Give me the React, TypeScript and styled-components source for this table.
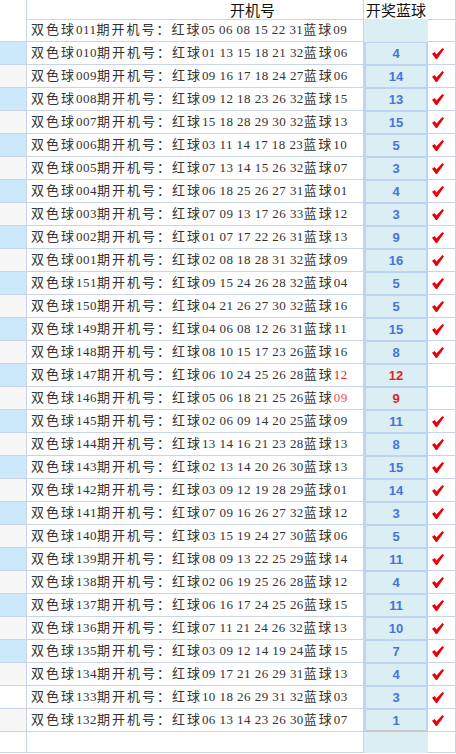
import styled, { createGlobalStyle } from 'styled-components';

const GlobalStyle = createGlobalStyle`
  html, body {
    margin: 0;
    padding: 0;
    background: #ffffff;
  }
`;

const Table = styled.div`
  width: 456px;
  display: flex;
  flex-direction: column;
  font-family: 'Liberation Serif', 'Noto Sans CJK SC', serif;
`;

const Row = styled.div<{ $height: number }>`
  display: grid;
  grid-template-columns: 27px 337px 64px 28px;
  height: ${p => p.$height}px;
`;

const SideCell = styled.div<{ $tone: 'white' | 'blue' | 'gray' }>`
  box-sizing: border-box;
  border-right: 1px solid #c9d5e6;
  border-bottom: 1px solid #c9d5e6;
  background: ${p => (p.$tone === 'blue' ? '#cce9fc' : p.$tone === 'gray' ? '#f7f7f7' : '#ffffff')};
`;

const HeadTitle = styled.div`
  box-sizing: border-box;
  border-right: 1px solid #c9d5e6;
  border-bottom: 1px solid #c9d5e6;
  padding-left: 203px;
  font-family: 'Noto Sans CJK SC', sans-serif;
  font-size: 15px;
  line-height: 19px;
  color: #111;
`;

const HeadBlue = styled.div`
  box-sizing: border-box;
  border-bottom: 1px solid #c9d5e6;
  font-family: 'Noto Sans CJK SC', sans-serif;
  font-size: 15px;
  line-height: 19px;
  color: #111;
  text-align: center;
  white-space: nowrap;
`;

const DrawCell = styled.div`
  box-sizing: border-box;
  border-right: 1px solid #c9d5e6;
  border-bottom: 1px solid #c9d5e6;
  padding-left: 4px;
  font-size: 13px;
  letter-spacing: 0.45px;
  line-height: 22px;
  color: #333;
  white-space: nowrap;
  overflow: hidden;
`;

const Han = styled.span`
  letter-spacing: 2px;
`;

const Miss = styled.span<{ $strong: boolean }>`
  color: ${p => (p.$strong ? '#e4222a' : '#f5484d')};
`;

const BlueCell = styled.div<{ $boxed: boolean; $last: boolean }>`
  box-sizing: border-box;
  background: #daeef4;
  border-left: 2px solid ${p => (p.$boxed ? '#bcd4ef' : 'transparent')};
  border-right: 2px solid ${p => (p.$boxed ? '#bcd4ef' : 'transparent')};
  border-top: 1px solid ${p => (p.$boxed ? '#bcd4ef' : 'transparent')};
  border-bottom: ${p => (p.$last ? '2px solid #c8c8c8' : p.$boxed ? '1px solid #bcd4ef' : '1px solid transparent')};
  display: flex;
  align-items: center;
  justify-content: center;
`;

const Num = styled.span<{ $miss: boolean }>`
  font-family: 'Liberation Sans', Arial, sans-serif;
  font-weight: bold;
  font-size: 13px;
  color: ${p => (p.$miss ? '#e41e25' : '#4674d9')};
`;

const CheckCell = styled.div`
  box-sizing: border-box;
  border-right: 1px solid #c9d5e6;
  border-bottom: 1px solid #c9d5e6;
  display: flex;
  align-items: center;
  padding-left: 4px;
`;

const Check = () => (
  <svg width="12" height="11" viewBox="0 0 12 11">
    <path d="M0 5.8 L2.8 4.1 L4.4 6.5 L10.4 0 L12 1.2 L5.1 10.9 L3.8 10.9 Z" fill="#e8000b" />
  </svg>
);

type Draw = {
  issue: string;
  reds: string;
  blue: string;
  num?: number;
  miss?: 'strong' | 'soft';
  tone: 'white' | 'blue' | 'gray';
};

const raw: [string, string, string, number | null][] = [
  ['011', '05 06 08 15 22 31', '09', null],
  ['010', '01 13 15 18 21 32', '06', 4],
  ['009', '09 16 17 18 24 27', '06', 14],
  ['008', '09 12 18 23 26 32', '15', 13],
  ['007', '15 18 28 29 30 32', '13', 15],
  ['006', '03 11 14 17 18 23', '10', 5],
  ['005', '07 13 14 15 26 32', '07', 3],
  ['004', '06 18 25 26 27 31', '01', 4],
  ['003', '07 09 13 17 26 33', '12', 3],
  ['002', '01 07 17 22 26 31', '13', 9],
  ['001', '02 08 18 28 31 32', '09', 16],
  ['151', '09 15 24 26 28 32', '04', 5],
  ['150', '04 21 26 27 30 32', '16', 5],
  ['149', '04 06 08 12 26 31', '11', 15],
  ['148', '08 10 15 17 23 26', '16', 8],
  ['147', '06 10 24 25 26 28', '12', 12],
  ['146', '05 06 18 21 25 26', '09', 9],
  ['145', '02 06 09 14 20 25', '09', 11],
  ['144', '13 14 16 21 23 28', '13', 8],
  ['143', '02 13 14 20 26 30', '13', 15],
  ['142', '03 09 12 19 28 29', '01', 14],
  ['141', '07 09 16 26 27 32', '12', 3],
  ['140', '03 15 19 24 27 30', '06', 5],
  ['139', '08 09 13 22 25 29', '14', 11],
  ['138', '02 06 19 25 26 28', '12', 4],
  ['137', '06 16 17 24 25 26', '15', 11],
  ['136', '07 11 21 24 26 32', '13', 10],
  ['135', '03 09 12 14 19 24', '15', 7],
  ['134', '09 17 21 26 29 31', '13', 4],
  ['133', '10 18 26 29 31 32', '03', 3],
  ['132', '06 13 14 23 26 30', '07', 1],
];

const draws: Draw[] = raw.map(([issue, reds, blue, num], i) => ({
  issue,
  reds,
  blue,
  num: num ?? undefined,
  miss: issue === '147' ? 'strong' : issue === '146' ? 'soft' : undefined,
  tone: i === 0 || issue === '133' ? 'white' : i % 2 === 1 ? 'blue' : 'gray',
}));

export default function App() {
  return (
    <>
      <GlobalStyle />
      <Table>
        <Row $height={19}>
          <SideCell $tone="white" />
          <HeadTitle>开机号</HeadTitle>
          <HeadBlue>开奖蓝球</HeadBlue>
          <CheckCell />
        </Row>
        {draws.map((d, i) => (
          <Row key={d.issue} $height={23}>
            <SideCell $tone={d.tone} />
            <DrawCell>
              <Han>双色球</Han>
              {d.issue}
              <Han>期开机号：红球</Han>
              {d.reds}
              <Han>蓝球</Han>
              {d.miss ? <Miss $strong={d.miss === 'strong'}>{d.blue}</Miss> : d.blue}
            </DrawCell>
            <BlueCell $boxed={d.num !== undefined} $last={i === draws.length - 1}>
              {d.num !== undefined && <Num $miss={!!d.miss}>{d.num}</Num>}
            </BlueCell>
            <CheckCell>{d.num !== undefined && !d.miss && <Check />}</CheckCell>
          </Row>
        ))}
        <Row $height={21}>
          <SideCell $tone="white" />
          <DrawCell />
          <BlueCell $boxed={false} $last={false} />
          <CheckCell />
        </Row>
      </Table>
    </>
  );
}
